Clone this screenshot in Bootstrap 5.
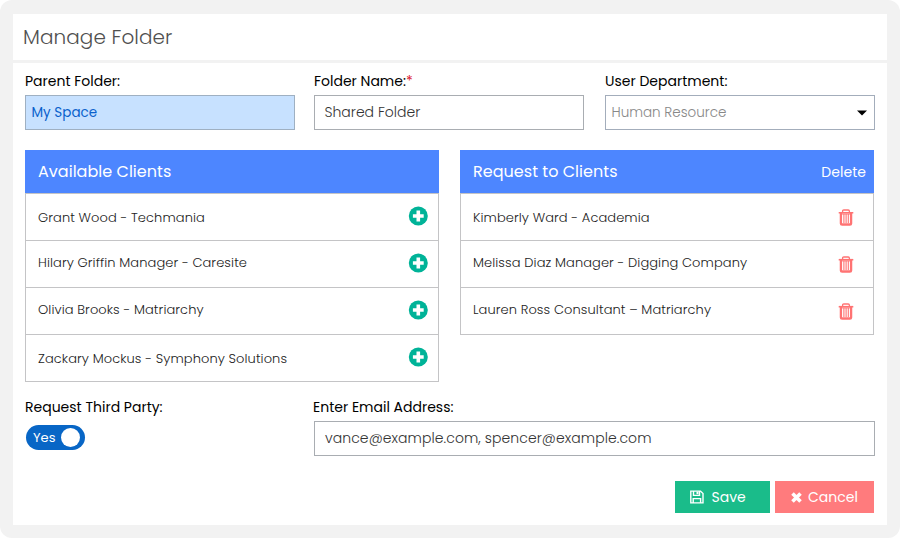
<!DOCTYPE html>
<html lang="en">
<head>
<meta charset="utf-8">
<meta name="viewport" content="width=device-width, initial-scale=1">
<title>Manage Folder</title>
<link href="https://cdn.jsdelivr.net/npm/bootstrap@5.3.0/dist/css/bootstrap.min.css" rel="stylesheet">
<script src="https://cdn.jsdelivr.net/npm/bootstrap@5.3.0/dist/js/bootstrap.bundle.min.js" defer></script>
<style>
body{font-family:Poppins,Inter,"Open Sans",sans-serif;font-size:14px;line-height:20px;color:#333;background:#fff}
.frame{width:900px;height:538px;padding:14px 13px 13px;background:#f2f2f2;border-radius:12px;overflow:hidden}
.panel{height:511px;background:#fff}
.titlebar{height:49px;border-bottom:3px solid #f2f2f2;padding:0 10px}
.titlebar h1{font-size:20px;line-height:46px;font-weight:300;color:#505050;letter-spacing:.08px}
.content-area{padding:8px 12px 0}
.lbl{color:#000;height:20px;margin-bottom:4px;white-space:nowrap}
.lbl i{color:#dc2030;font-style:normal}
.box{height:35px;border:1px solid #a9adb2;border-radius:0;padding:0 9.5px 2px;color:#333;font-weight:300;white-space:nowrap}
.fields{display:grid;grid-template-columns:270px 270px 270px;column-gap:19px}
.fields>:last-child{margin-left:2px;margin-right:-2px}
.box.parent-box{background:#c7e1ff;color:#0a61cc;font-size:13.5px;padding:0 5.5px;border-color:#9fb0c2;font-weight:400}
.box.dept{color:#888;font-size:13.5px;padding:0 7px 0 5.5px;border-color:#a3adbb}
.lists{margin-top:20px;gap:21px;height:232px}
.list-col{width:414px}
.list-head{height:43px;background:#4d86ff;color:#fff;font-size:16px;padding:0 8px 0 13px;letter-spacing:.03px}
.list-head small{font-size:14px}
.rows .list-group-item{height:48px;border-color:#c4c4c6;padding:0 10px 0 12px;color:#222;font-size:13px;font-weight:300;border-radius:0;background:#fff;letter-spacing:.09px}
.rows .list-group-item+.list-group-item{height:47px}
.rows .list-group-item:nth-child(1) span,.rows .list-group-item:nth-child(4) span{padding-top:2px}
.rows .list-group-item:nth-child(2) span,.rows .list-group-item:nth-child(3) span{padding-bottom:2px}
.rows .plus{margin-bottom:2px}
.rows .trash{margin-right:9px}
.third{margin-top:15px}
.third .side{width:288px}
.third .box{margin-left:1px;padding-left:10px;letter-spacing:.08px}
.toggle{width:59px;height:25px;background:#0866c6;color:#fff;font-size:13px;margin:8px 0 0 1px;padding:0 5px 0 7px}
.knob{width:19px;height:19px;background:#fff}
.actions{margin-top:25px;gap:5px;padding-right:1px}
.actions .btn{height:32px;border:0;border-radius:0;color:#fff;font-size:14px;line-height:20px;padding:0}
.actions .save{width:95px;background:#1abc8a;padding-left:15px;gap:7.5px}
.actions .cancel{width:99px;background:#ff7b7d;padding-left:16px;gap:6px}
</style>
</head>
<body>
<svg class="d-none">
<symbol id="plus" viewBox="0 0 20 20"><circle cx="10.300" cy="10" r="9.500" fill="#00b398"/><path d="M8.500 4.600h3.600v3.600h3.600v3.600h-3.600v3.600H8.500v-3.600H4.900V8.200h3.600z" fill="#fff"/></symbol>
<symbol id="trash" viewBox="0 0 16 17"><path d="M4.600 3.200V2.200Q4.600 1 5.800 1h4.400Q11.400 1 11.400 2.200V3.200" fill="none" stroke="#ff7373" stroke-width="1.300"/><path d="M.7 2.900h14.600v1.600H.7z" fill="#ff7373"/><path d="M2.900 4v10.400q0 1.100 1.200 1.100h7.800q1.200 0 1.200-1.100V4" fill="none" stroke="#ff7373" stroke-width="2.300"/><path d="M3 4.400h10v1H3z" fill="#ff7373"/><path d="M5.900 5v9M8.100 5v9M10.300 5v9" stroke="#ff7373" stroke-width="1.100"/></symbol>
</svg>
<div class="frame"><main class="panel">
<header class="titlebar"><h1 class="m-0">Manage Folder</h1></header>
<div class="content-area">
<div class="fields">
<div><div class="lbl">Parent Folder:</div><div class="box parent-box d-flex align-items-center">My Space</div></div>
<div><div class="lbl">Folder Name:<i>*</i></div><div class="box d-flex align-items-center">Shared Folder</div></div>
<div><div class="lbl">User Department:</div><div class="box dept d-flex align-items-center justify-content-between"><span>Human Resource</span><svg width="10" height="6" viewBox="0 0 10 6"><path d="M0 .5h10L5 5.500z" fill="#000"/></svg></div></div>
</div>
<div class="lists d-flex align-items-start">
<section class="list-col"><div class="list-head d-flex align-items-center">Available Clients</div>
<ul class="list-group rows">
<li class="list-group-item d-flex align-items-center justify-content-between"><span>Grant Wood - Techmania</span><svg class="plus" width="20" height="20"><use href="#plus"/></svg></li>
<li class="list-group-item d-flex align-items-center justify-content-between"><span>Hilary Griffin Manager - Caresite</span><svg class="plus" width="20" height="20"><use href="#plus"/></svg></li>
<li class="list-group-item d-flex align-items-center justify-content-between"><span>Olivia Brooks - Matriarchy</span><svg class="plus" width="20" height="20"><use href="#plus"/></svg></li>
<li class="list-group-item d-flex align-items-center justify-content-between"><span>Zackary Mockus - Symphony Solutions</span><svg class="plus" width="20" height="20"><use href="#plus"/></svg></li>
</ul></section>
<section class="list-col"><div class="list-head d-flex align-items-center justify-content-between"><span>Request to Clients</span><small>Delete</small></div>
<ul class="list-group rows">
<li class="list-group-item d-flex align-items-center justify-content-between"><span>Kimberly Ward - Academia</span><svg class="trash" width="16" height="17"><use href="#trash"/></svg></li>
<li class="list-group-item d-flex align-items-center justify-content-between"><span>Melissa Diaz Manager - Digging Company</span><svg class="trash" width="16" height="17"><use href="#trash"/></svg></li>
<li class="list-group-item d-flex align-items-center justify-content-between"><span>Lauren Ross Consultant – Matriarchy</span><svg class="trash" width="16" height="17"><use href="#trash"/></svg></li>
</ul></section>
</div>
<div class="third d-flex">
<div class="side"><div class="lbl">Request Third Party:</div><div class="toggle rounded-pill d-flex align-items-center justify-content-between"><span>Yes</span><span class="knob rounded-circle"></span></div></div>
<div class="flex-grow-1"><div class="lbl">Enter Email Address:</div><div class="box d-flex align-items-center">vance@example.com, spencer@example.com</div></div>
</div>
<div class="actions d-flex justify-content-end">
<button type="button" class="btn save d-flex align-items-center"><svg width="14" height="14" viewBox="0 0 14 14" fill="none" stroke="#fff" stroke-width="1.400"><path d="M.8 1.100h9.700l2.500 2.500v9.300H.8zM3.200 12.800V8.600h7.400v4.200M3.500 1.200v4.200h6V1.200"/><path d="M6.500 1.600h2v2.600h-2z" fill="#fff" stroke="none"/></svg>Save</button>
<button type="button" class="btn cancel d-flex align-items-center"><svg width="11" height="11" viewBox="0 0 11 11"><path d="M1.500 1.500l8 8M9.500 1.500l-8 8" stroke="#fff" stroke-width="3.600"/></svg>Cancel</button></div>
</div></main></div>
</body></html>
